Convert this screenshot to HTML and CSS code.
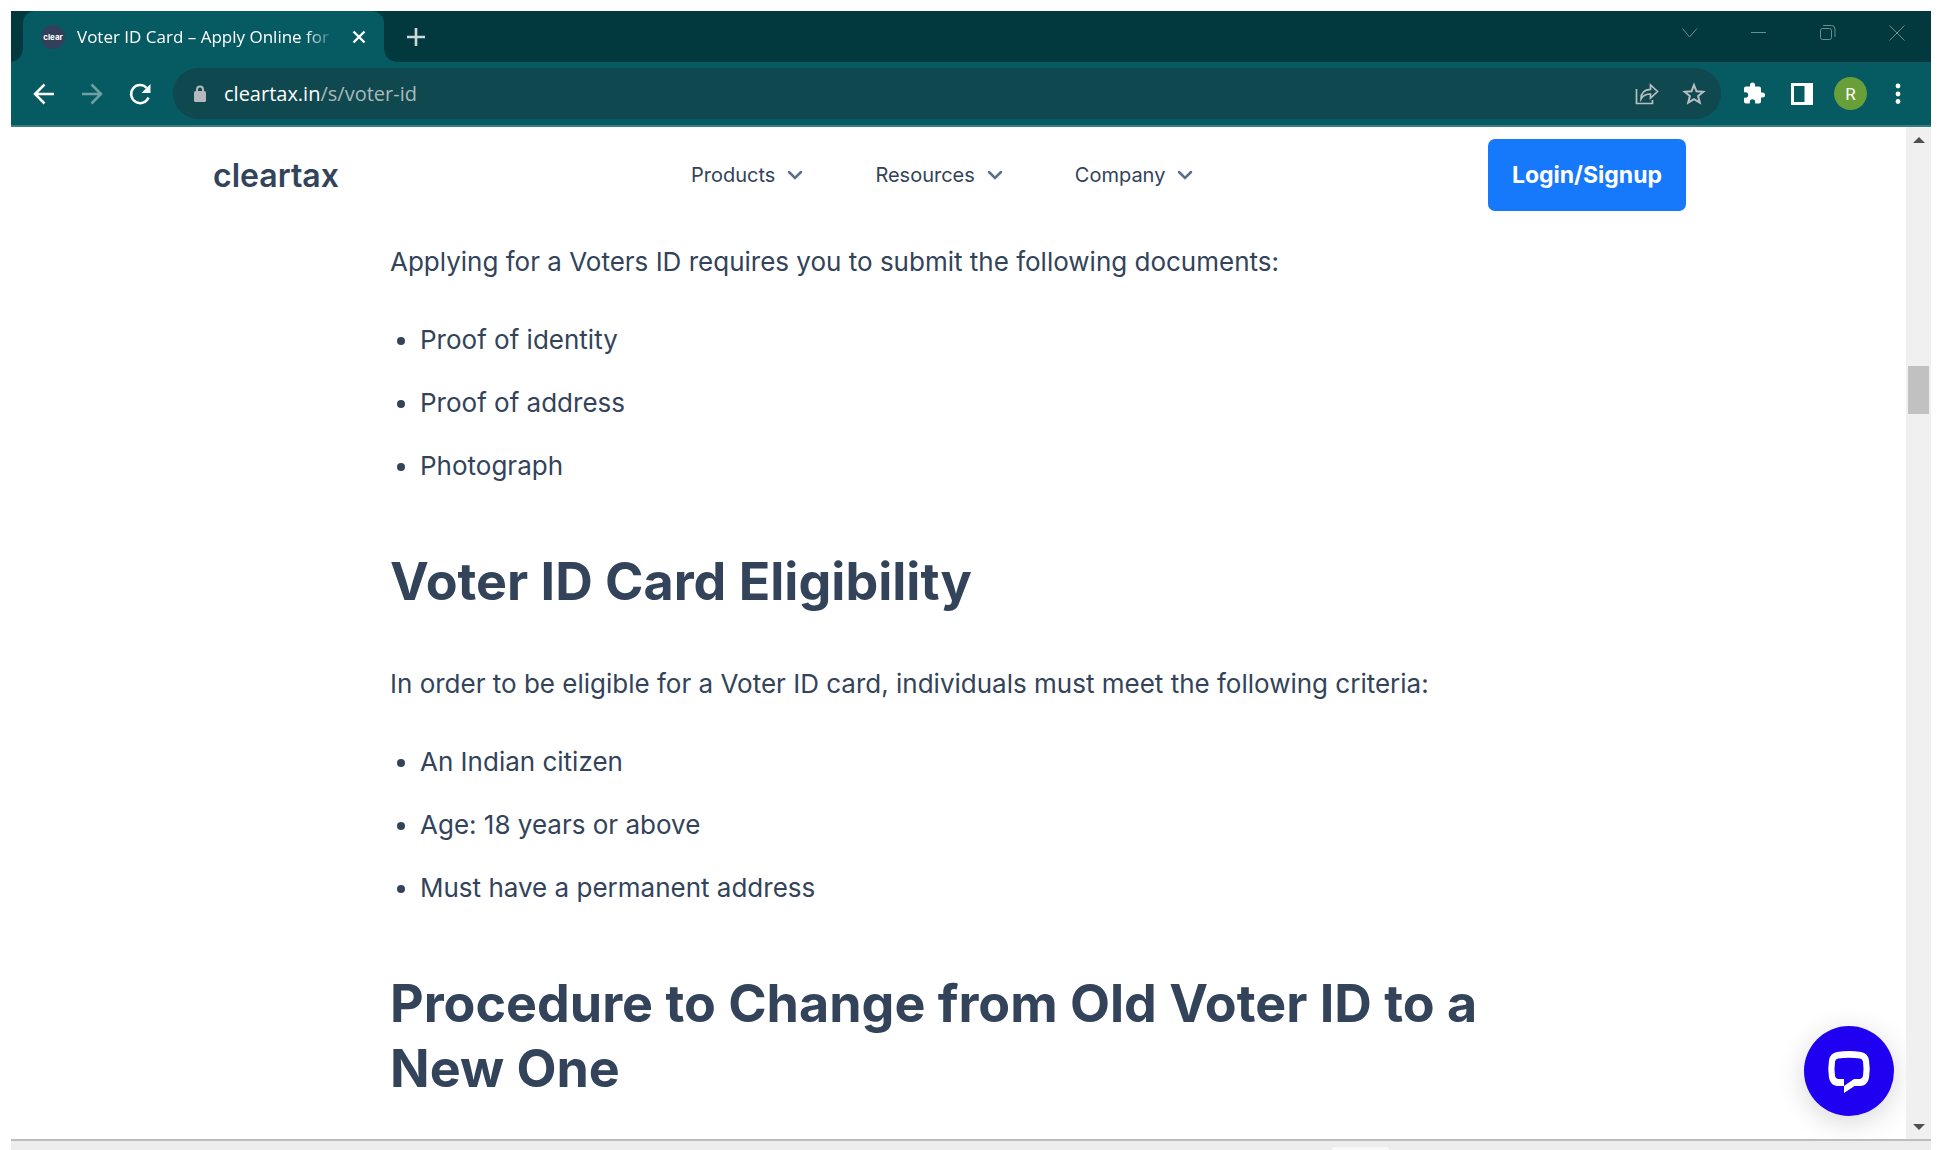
FILE: index.html
```html
<!DOCTYPE html>
<html lang="en">
<head>
<meta charset="utf-8">
<title>Voter ID Card – Apply Online for Voter ID</title>
<link rel="stylesheet" href="styles.css">
</head>
<body>
<div class="window">
  <div class="tabstrip">
    <div class="tab">
      <span class="favicon">clear</span>
      <span class="tab-title">Voter ID Card – Apply Online for</span>
      <button class="icon-btn tab-close" aria-label="Close tab"><svg width="14" height="14" viewBox="0 0 14 14"><path d="M1.5 1.5l11 11M12.5 1.5l-11 11" stroke="#fff" stroke-width="2.4"/></svg></button>
    </div>
    <button class="icon-btn new-tab" aria-label="New tab"><svg width="18" height="18" viewBox="0 0 18 18"><path d="M9 0v18M0 9h18" stroke="#ccd8d9" stroke-width="2.6"/></svg></button>
    <div class="window-controls">
      <button class="icon-btn" aria-label="Search tabs"><svg width="16" height="16" viewBox="0 0 16 16"><path d="M.5 3.5l7 8.500 7.500-8.500"/></svg></button>
      <button class="icon-btn" aria-label="Minimize"><svg width="16" height="16" viewBox="0 0 16 16"><path d="M0 7.500h15"/></svg></button>
      <button class="icon-btn" aria-label="Restore"><svg width="16" height="16" viewBox="0 0 16 16"><rect x=".5" y="3.500" width="11" height="11" rx="2"/><path d="M3 .5h8.500a3.500 3.500 0 0 1 3.500 3.500v8"/></svg></button>
      <button class="icon-btn" aria-label="Close"><svg width="16" height="16" viewBox="0 0 16 16"><path d="M.5.5l15 15M15.500.5l-15 15"/></svg></button>
    </div>
  </div>

  <div class="toolbar">
    <div class="nav-buttons">
      <button class="icon-btn" aria-label="Back"><svg width="24" height="24" viewBox="0 0 24 24"><path d="M22 12H3.500M12.500 2.500L3 12l9.500 9.500" fill="none" stroke="#fff" stroke-width="2.500"/></svg></button>
      <button class="icon-btn" aria-label="Forward"><svg width="24" height="24" viewBox="0 0 24 24"><path d="M2 12h18.500M11.500 2.500L21 12l-9.500 9.500" fill="none" stroke="#6fa0a3" stroke-width="2.500"/></svg></button>
      <button class="icon-btn" aria-label="Reload"><svg width="24" height="24" viewBox="0 0 24 24"><path d="M20.500 15.500A9 9 0 1 1 18.600 5.800" fill="none" stroke="#fff" stroke-width="2.500"/><path d="M22.500 2v9h-9z" fill="#fff"/></svg></button>
    </div>
    <div class="omnibox">
      <svg class="lock" width="14" height="18" viewBox="0 0 14 18"><rect x="1" y="6" width="12" height="11" rx="1.500" fill="#b3b9bd"/><path d="M4 7V4.500a3 3 0 0 1 6 0V7" fill="none" stroke="#b3b9bd" stroke-width="2"/></svg>
      <div class="url"><span class="host">cleartax.in</span>/s/voter-id</div>
      <button class="icon-btn share" aria-label="Share"><svg width="24" height="24" viewBox="0 0 24 24"><path d="M1.500 7v14.500h16V18M6 17c0-6.500 4-9.500 9.500-9.700V3l7 6.500-7 6.500v-4C11 12 8 13.500 6 17z" fill="none" stroke="#b8bfc2" stroke-width="1.700"/></svg></button>
      <button class="icon-btn star" aria-label="Bookmark this tab"><svg width="24" height="24" viewBox="0 0 24 24"><path d="M12 3l2.500 6.300 6.800.5-5.200 4.300 1.700 6.600L12 17.100l-5.800 3.600 1.700-6.600-5.200-4.300 6.800-.5z" fill="none" stroke="#b8bfc2" stroke-width="2"/></svg></button>
    </div>
    <div class="actions">
      <button class="icon-btn" aria-label="Extensions"><svg width="24" height="24" viewBox="0 0 24 24"><path fill="#fff" d="M20.500 10.500H19V6.500a2 2 0 0 0-2-2h-4V3a2.500 2.500 0 0 0-5 0v1.500H4a2 2 0 0 0-2 2v3.800h1.500a2.700 2.700 0 0 1 0 5.400H2v3.800a2 2 0 0 0 2 2h3.800V20a2.700 2.700 0 0 1 5.400 0v1.500H17a2 2 0 0 0 2-2v-4h1.500a2.500 2.500 0 0 0 0-5z"/></svg></button>
      <button class="icon-btn" aria-label="Side panel"><svg width="24" height="24" viewBox="0 0 24 24"><path fill="#fff" fill-rule="evenodd" d="M1 1h22v22H1zM4 4v16h10.500V4z"/></svg></button>
      <button class="icon-btn avatar" aria-label="Profile">R</button>
      <button class="icon-btn menu" aria-label="Menu"><svg width="6" height="22" viewBox="0 0 6 22"><g fill="#fff"><circle cx="3" cy="3" r="2.400"/><circle cx="3" cy="11" r="2.400"/><circle cx="3" cy="18.500" r="2.400"/></g></svg></button>
    </div>
  </div>

  <div class="viewport">
    <div class="page">
      <header class="site-header">
        <a class="logo" href="#">cleartax</a>
        <nav class="site-nav">
          <a href="#">Products<svg width="16" height="16" viewBox="0 0 16 16"><path d="M2 5l6 6 6-6"/></svg></a>
          <a href="#">Resources<svg width="16" height="16" viewBox="0 0 16 16"><path d="M2 5l6 6 6-6"/></svg></a>
          <a href="#">Company<svg width="16" height="16" viewBox="0 0 16 16"><path d="M2 5l6 6 6-6"/></svg></a>
        </nav>
        <button class="login">Login/Signup</button>
      </header>
      <main class="article">
        <p>Applying for a Voters ID requires you to submit the following documents:</p>
        <ul>
          <li>Proof of identity</li>
          <li>Proof of address</li>
          <li>Photograph</li>
        </ul>
        <h2>Voter ID Card Eligibility</h2>
        <p>In order to be eligible for a Voter ID card, individuals must meet the following criteria:</p>
        <ul>
          <li>An Indian citizen</li>
          <li>Age: 18 years or above</li>
          <li>Must have a permanent address</li>
        </ul>
        <h2>Procedure to Change from Old Voter ID to a New One</h2>
      </main>
      <button class="chat" aria-label="Open chat"><svg width="44" height="44" viewBox="0 0 44 44"><path fill="#fff" fill-rule="evenodd" d="M10 3Q22 1 34 3Q41 4.500 42 11Q43.500 20 42 29Q40.500 36 34 37H27.500L17 44V37H10Q3.500 36 2 29Q.5 20 2 11Q3 4.500 10 3ZM11 9.500Q8.500 10 8 12.500Q7 20 8 27Q8.500 29.500 11 30H17V37L27 30H33Q35.500 29.500 36 27Q37 20 36 12.500Q35.500 10 33 9.500Q22 8 11 9.500Z"/></svg></button>
    </div>
    <div class="scrollbar">
      <svg width="12" height="6" viewBox="0 0 12 6"><path d="M6 0l6 6H0z" fill="#505050"/></svg>
      <div class="track"><div class="thumb"></div></div>
      <svg width="12" height="6" viewBox="0 0 12 6"><path d="M0 0h12L6 6z" fill="#505050"/></svg>
    </div>
  </div>
  <div class="taskbar"><span class="task"></span></div>
</div>
</body>
</html>
```
FILE: styles.css
```css
* {
  box-sizing: border-box;
}

body {
  margin: 0;
  background: #fff;
  color: #32435a;
  font-family: Inter, "Liberation Sans", sans-serif;
}

.window {
  display: flex;
  flex-direction: column;
  height: 100vh;
  padding: 11px 11px 0;
  overflow: hidden;
}

.icon-btn {
  display: flex;
  align-items: center;
  justify-content: center;
  padding: 0;
  border: 0;
  background: none;
}

/* Tab strip */
.tabstrip {
  display: flex;
  flex: none;
  height: 51px;
  padding-left: 12px;
  background: #02393f;
  font-family: "Open Sans", "Noto Sans", sans-serif;
}

.tab {
  position: relative;
  display: flex;
  align-items: center;
  width: 361px;
  padding: 0 18px;
  border-radius: 12px 12px 0 0;
  background: #055b61;
  color: #fff;
}

.tab::before,
.tab::after {
  content: "";
  position: absolute;
  bottom: 0;
  width: 12px;
  height: 12px;
}

.tab::before {
  right: 100%;
  background: radial-gradient(circle at 0 0, #02393f 11px, #055b61 12px);
}

.tab::after {
  left: 100%;
  background: radial-gradient(circle at 100% 0, #02393f 11px, #055b61 12px);
}

.favicon {
  display: flex;
  align-items: center;
  justify-content: center;
  width: 24px;
  height: 24px;
  border-radius: 50%;
  background: #32405b;
  font: 700 8px Inter, sans-serif;
}

.tab-title {
  flex: 1;
  margin: 0 16px 0 12px;
  overflow: hidden;
  font-size: 17px;
  white-space: nowrap;
  mask-image: linear-gradient(to right, #000 88%, transparent);
}

.new-tab {
  margin-left: 23px;
}

.window-controls {
  display: flex;
  gap: 53px;
  margin-left: auto;
  padding: 0 26px 8px 0;
}

.window-controls svg {
  fill: none;
  stroke: #6b8e91;
}

/* Toolbar */
.toolbar {
  display: flex;
  flex: none;
  align-items: center;
  height: 65px;
  padding: 0 30px 0 21px;
  border-bottom: 2px solid #3a7e83;
  background: #055b61;
  font-family: "Open Sans", "Noto Sans", sans-serif;
}

.nav-buttons {
  display: flex;
  gap: 24px;
}

.omnibox {
  display: flex;
  flex: 1;
  align-items: center;
  height: 51px;
  margin: 0 21px;
  padding: 0 15px 0 20px;
  border-radius: 26px;
  background: #0f484f;
}

.url {
  flex: 1;
  margin-left: 17px;
  color: #a9b9bc;
  font-size: 20px;
}

.host {
  color: #fff;
}

.star {
  margin-left: 23px;
}

.actions {
  display: flex;
  align-items: center;
  gap: 24px;
}

.avatar {
  width: 33px;
  height: 33px;
  margin: 0 -4px;
  border-radius: 50%;
  background: #689f38;
  color: #fff;
  font: 400 17px Roboto, sans-serif;
}

.menu {
  margin-left: 8px;
}

/* Web page */
.viewport {
  display: flex;
  flex: 1;
  min-height: 0;
}

.page {
  position: relative;
  flex: 1;
  overflow: hidden;
}

.site-header {
  display: grid;
  grid-template-columns: 478px 1fr auto;
  align-items: center;
  padding: 12px 220px 12px 202px;
}

.logo {
  color: #32435a;
  font-size: 32px;
  font-weight: 600;
  text-decoration: none;
}

.site-nav {
  display: flex;
  gap: 72px;
}

.site-nav a {
  display: flex;
  align-items: center;
  gap: 12px;
  color: #32435a;
  font-size: 20px;
  text-decoration: none;
}

.site-nav path {
  fill: none;
  stroke: #5a6f8c;
  stroke-width: 2.5;
  stroke-linecap: round;
}

.login {
  height: 72px;
  padding: 0 24px;
  border: 0;
  border-radius: 7px;
  background: #1678fb;
  color: #fff;
  font: 700 23px Inter, sans-serif;
}

.article {
  padding: 19px 379px 0;
  font-size: 26px;
  line-height: 40px;
}

.article p {
  margin: 0 0 38px;
}

.article ul {
  margin: 0;
  padding: 0 0 0 30px;
}

.article li {
  margin-bottom: 23px;
}

.article h2 {
  margin: 63px 0 50px;
  font-size: 52px;
  font-weight: 700;
  line-height: 65px;
}

.chat {
  position: absolute;
  right: 12px;
  bottom: 23px;
  display: flex;
  align-items: center;
  justify-content: center;
  width: 90px;
  height: 90px;
  border: 0;
  border-radius: 50%;
  background: #2000f0;
  box-shadow: 0 6px 28px rgba(0, 0, 0, 0.16);
}

.scrollbar {
  display: flex;
  flex-direction: column;
  align-items: center;
  width: 25px;
  padding: 10px 0 9px;
  background: #f0f0f0;
}

.track {
  flex: 1;
  width: 21px;
  padding-top: 223px;
}

.thumb {
  height: 48px;
  background: #c1c1c1;
}

.taskbar {
  display: flex;
  flex: none;
  height: 11px;
  padding: 6px 542px 0 0;
  border-top: 2px solid #bcbcbc;
  background: #ededed;
}

.task {
  width: 57px;
  margin-left: auto;
  border-radius: 6px 6px 0 0;
  background: #f8f8f8;
}
```
